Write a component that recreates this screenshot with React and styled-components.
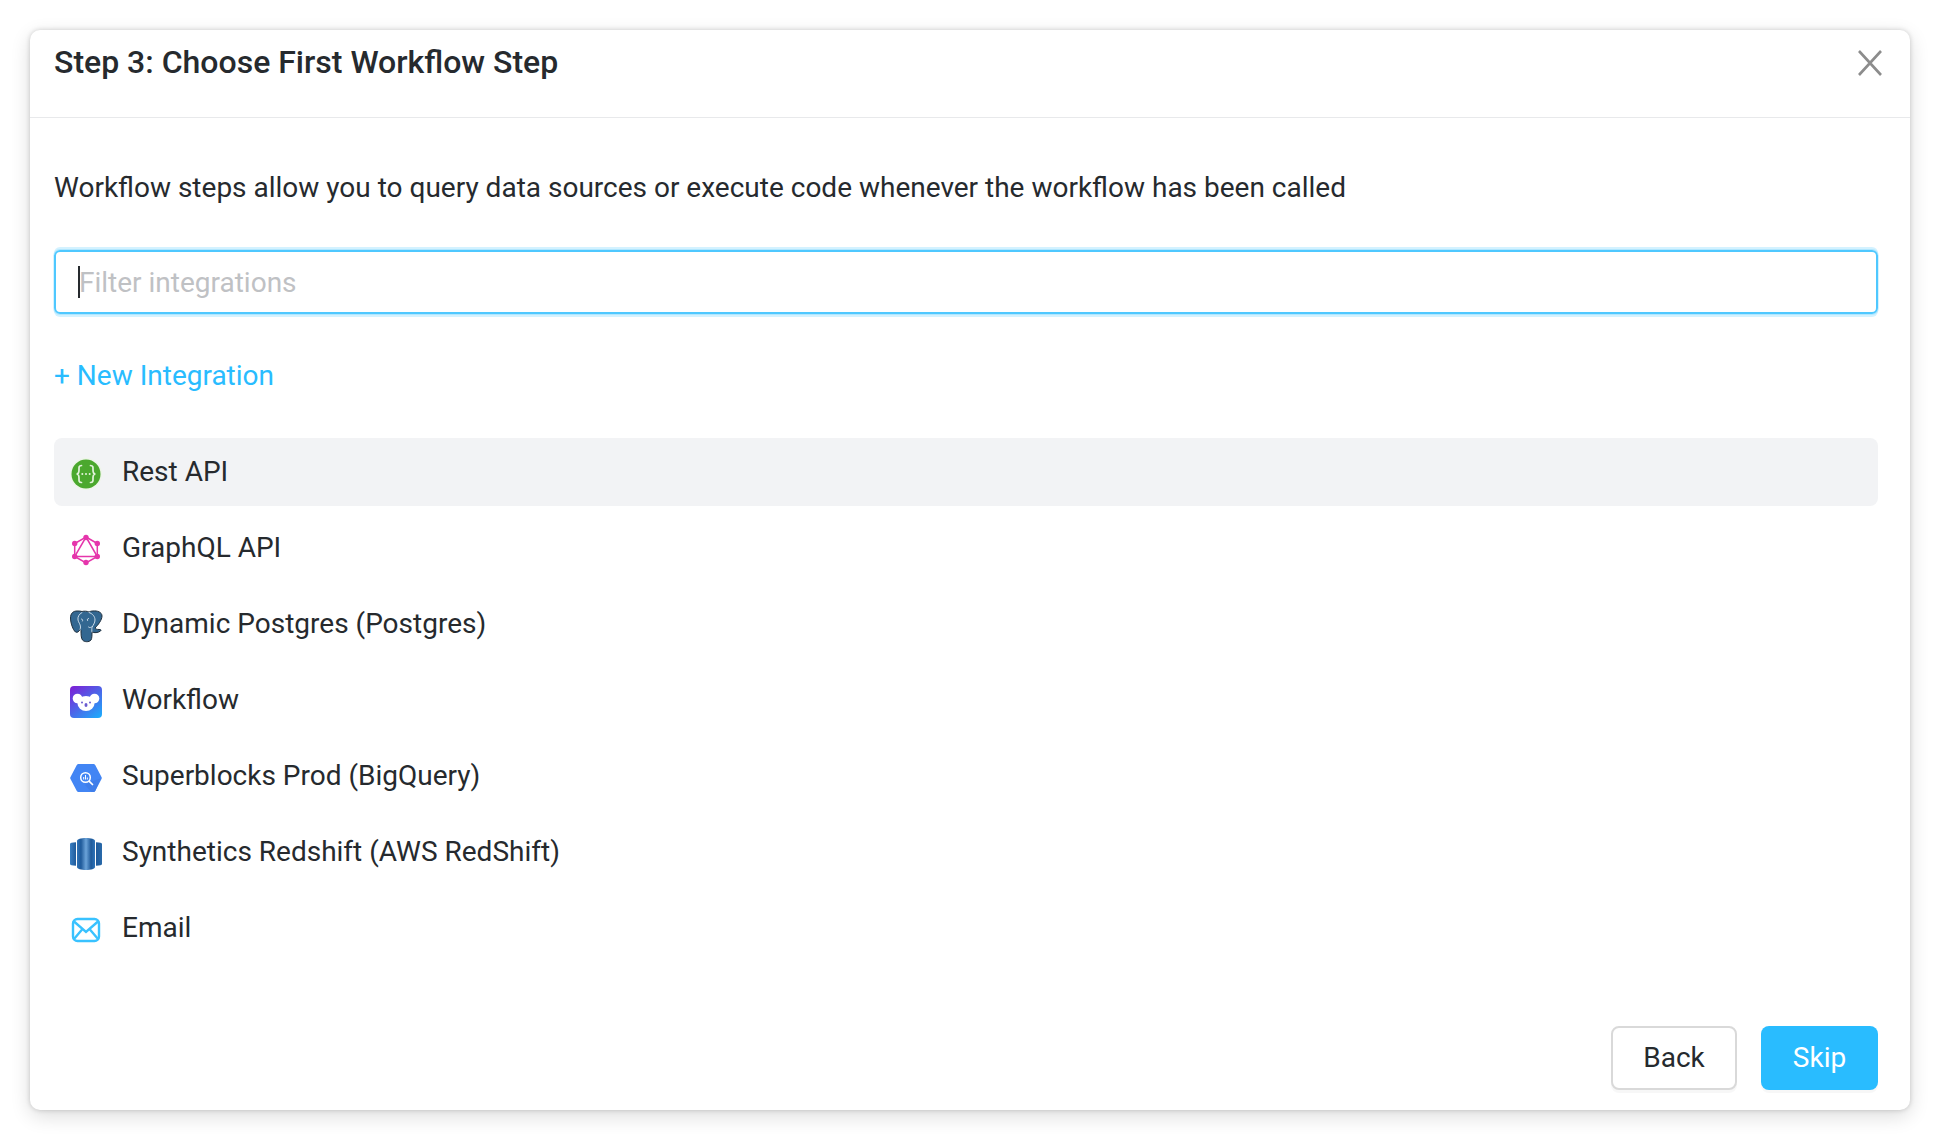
import React from 'react';
import styled, { createGlobalStyle } from 'styled-components';

const GlobalStyle = createGlobalStyle`
	html, body {
		margin: 0;
		background: #ffffff;
	}
	body {
		font-family: Roboto, "Liberation Sans", sans-serif;
		color: #262a2e;
	}
	* {
		box-sizing: border-box;
	}
`;

const Page = styled.div`
	width: 1940px;
	height: 1140px;
	padding: 30px;
`;
const Modal = styled.div`
	width: 1880px;
	height: 1080px;
	background: #fff;
	border-radius: 10px;
	box-shadow: 0 6px 20px rgba(0, 0, 0, 0.14), 0 0 5px rgba(0, 0, 0, 0.18);
	display: flex;
	flex-direction: column;
`;
const Header = styled.div`
	height: 88px;
	flex: none;
	padding: 0 27px 0 24px;
	border-bottom: 1px solid #e8e9eb;
	display: flex;
	justify-content: space-between;
	align-items: flex-start;
`;
const Title = styled.h2`
	margin: 14px 0 0;
	font-size: 32px;
	line-height: 36px;
	font-weight: 500;
	letter-spacing: 0;
`;
const CloseButton = styled.button`
	border: 0;
	background: none;
	padding: 0;
	margin: 20px 0 0;
	width: 26px;
	height: 26px;
	color: #8c8c8c;
	display: block;
`;
const Body = styled.div`
	flex: 1;
	padding: 52px 32px 20px 24px;
	display: flex;
	flex-direction: column;
`;
const Description = styled.p`
	margin: 0;
	font-size: 28px;
	line-height: 36px;
`;
const FilterBox = styled.div`
	position: relative;
	margin-top: 44px;
	height: 64px;
	border: 2px solid #4fc8ff;
	border-radius: 6px;
	box-shadow: 0 -3px 0 0 rgba(41, 188, 255, 0.2), 0 3px 0 0 rgba(41, 188, 255, 0.2), 0 0 0 1px rgba(41, 188, 255, 0.2);
	display: flex;
	align-items: center;
	padding-left: 23px;
`;
const Caret = styled.span`
	position: absolute;
	left: 22px;
	top: 14px;
	width: 2px;
	height: 32px;
	background: #262a2e;
`;
const FilterInput = styled.input`
	border: 0;
	outline: 0;
	width: 100%;
	padding: 0;
	font: 400 28px Roboto, sans-serif;
	color: #262a2e;
	background: transparent;
	&::placeholder {
		color: #bfc1c4;
		opacity: 1;
	}
`;
const NewLink = styled.a`
	margin-top: 44px;
	font-size: 28px;
	line-height: 36px;
	color: #29bcff;
`;
const List = styled.div`
	margin-top: 44px;
	display: flex;
	flex-direction: column;
	gap: 8px;
`;
const Row = styled.div`
	height: 68px;
	border-radius: 8px;
	padding-left: 16px;
	padding-bottom: 1px;
	display: flex;
	align-items: center;
	gap: 20px;
	font-size: 28px;
	background: ${props => (props.$active ? '#f2f3f5' : 'transparent')};
`;
const IconBox = styled.span`
	width: 32px;
	height: 32px;
	flex: none;
	margin-top: 5px;
	display: block;
	svg {
		display: block;
	}
`;
const Footer = styled.div`
	margin-top: auto;
	display: flex;
	justify-content: flex-end;
	gap: 24px;
`;
const Button = styled.button`
	height: 64px;
	width: ${props => props.$width}px;
	border-radius: 8px;
	border: ${props => (props.$primary ? '0' : '2px solid #d9d9d9')};
	background: ${props => (props.$primary ? '#29bcff' : '#fff')};
	color: ${props => (props.$primary ? '#fff' : '#262a2e')};
	box-shadow: 0 3px 0 rgba(0, 0, 0, 0.03);
	font: 400 28px Roboto, sans-serif;
	padding: 0 0 2px;
`;

const RestIcon = () => (
	<svg width="32" height="32" viewBox="0 0 32 32">
		<circle cx="16" cy="16" r="16" fill="#eef5e9" />
		<circle cx="16" cy="16" r="14.500" fill="#4ba82e" />
		<g fill="none" stroke="#e4f3dc" strokeWidth="1.700" strokeLinecap="round">
			<path d="M11.500 7.500c-3 0-2.500 2.500-2.500 4.500 0 2-.5 4-2.500 4 2 0 2.500 2 2.500 4 0 2-.5 4.500 2.500 4.500" />
			<path d="M20.500 7.500c3 0 2.500 2.500 2.500 4.500 0 2 .5 4 2.500 4-2 0-2.500 2-2.500 4 0 2 .5 4.500-2.500 4.500" />
		</g>
		<g fill="#e4f3dc">
			<circle cx="12.300" cy="16" r="1" />
			<circle cx="16" cy="16" r="1" />
			<circle cx="19.700" cy="16" r="1" />
		</g>
	</svg>
);

const GraphqlIcon = () => (
	<svg width="32" height="32" viewBox="0 0 32 32">
		<g fill="none" stroke="#e535ab" strokeWidth="1.500">
			<path d="M16 3 27.300 9.500V22.500L16 29 4.700 22.500V9.500Z" />
			<path d="M16 3 27.300 22.500H4.700Z" />
		</g>
		<g fill="#e535ab">
			<circle cx="16" cy="3.500" r="2.700" />
			<circle cx="27.300" cy="9.500" r="2.700" />
			<circle cx="27.300" cy="22.500" r="2.700" />
			<circle cx="16" cy="28.500" r="2.700" />
			<circle cx="4.700" cy="22.500" r="2.700" />
			<circle cx="4.700" cy="9.500" r="2.700" />
		</g>
	</svg>
);

const PostgresIcon = () => (
	<svg width="33" height="33" viewBox="0 0 33 33">
		<path
			d="M7 1C3 1 .5 3.500 .5 8c0 5 2.500 12 5 14 2 1 3.500-.5 4.500-2.500l1 1c0 3.500 0 7.500 1.500 9.500 1.500 2 6.500 2.500 8.500 0 1-1.500 1-5 1-8 2 1 6 1 8.500-1 1-1 .5-1.500-1.500-1.500-2 0-3.500-.5-4-1.500 3-3 7-8 7-12 0-4-5-5.500-9-5-2 0-3 .5-4 1-2-1-5-1-7-.5C10.500 1 9 1 7 1Z"
			fill="#336791"
			stroke="#1f2f3d"
			strokeWidth="1"
		/>
		<g fill="none" stroke="#dbe7f1" strokeWidth="0.900" strokeLinecap="round">
			<path d="M12 2.500C9 4 7.500 7 8 10c.4 2.500 2.500 4 2.500 7 0 1.500-.5 2.500-.5 2.500" />
			<path d="M19 2.500c3.500 1 6 4 6 7.500 0 3-2 5-3 7.500-.3 1-.1 3.500-.1 4.500" />
			<path d="M11.500 9c1 0 1.500 1 1 2M18.500 8.500c-1 0-1.500 1-1 2" />
			<path d="M21.500 17c-1.500 1-2.500.5-3 0" />
		</g>
	</svg>
);

const WorkflowIcon = () => (
	<svg width="32" height="32" viewBox="0 0 32 32">
		<defs>
			<linearGradient id="koala" x1="0.100" y1="0" x2="0.900" y2="1">
				<stop offset="0" stopColor="#7b22d6" />
				<stop offset="1" stopColor="#1ea9fb" />
			</linearGradient>
		</defs>
		<rect width="32" height="32" rx="4" fill="url(#koala)" />
		<g fill="#fff">
			<circle cx="7.500" cy="12.500" r="4.800" />
			<circle cx="24.500" cy="12.500" r="4.800" />
			<ellipse cx="16" cy="17.500" rx="8.500" ry="7.500" />
		</g>
		<g fill="#6a5bd0">
			<circle cx="12" cy="16.500" r="1" />
			<circle cx="20" cy="16.500" r="1" />
			<ellipse cx="16" cy="19" rx="1.500" ry="2" />
		</g>
	</svg>
);

const BigQueryIcon = () => (
	<svg width="32" height="32" viewBox="0 0 32 32">
		<path d="M8.500 2h15c.7 0 1.300.4 1.700 1L31.500 15a2 2 0 0 1 0 2L25.200 29c-.4.600-1 1-1.700 1h-15c-.7 0-1.300-.4-1.700-1L.5 17a2 2 0 0 1 0-2L6.800 3c.4-.6 1-1 1.700-1Z" fill="#4285f4" />
		<path d="M20 20l10.600-3.400L25.200 29c-.4.600-1 1-1.700 1h-2L15 23Z" fill="#3f7eea" />
		<circle cx="15.500" cy="15.500" r="4.800" fill="none" stroke="#fff" strokeWidth="1.500" />
		<path d="M19.300 19.300 22.500 22.500" stroke="#fff" strokeWidth="1.700" strokeLinecap="round" />
		<path d="M13.700 15v2.500M15.500 13v4.500M17.300 15.500v2" stroke="#fff" strokeWidth="1" />
	</svg>
);

const RedshiftIcon = () => (
	<svg width="32" height="32" viewBox="0 0 32 32">
		<defs>
			<linearGradient id="rsMid" x1="0" y1="0" x2="1" y2="0">
				<stop offset="0" stopColor="#2e73b8" />
				<stop offset="0.220" stopColor="#1f5a9a" />
				<stop offset="0.500" stopColor="#6ba3d9" />
				<stop offset="0.780" stopColor="#1f5a9a" />
				<stop offset="1" stopColor="#2e73b8" />
			</linearGradient>
			<linearGradient id="rsLeft" x1="0" y1="0" x2="1" y2="0">
				<stop offset="0" stopColor="#3a80c4" />
				<stop offset="1" stopColor="#1f5a9a" />
			</linearGradient>
			<linearGradient id="rsRight" x1="0" y1="0" x2="1" y2="0">
				<stop offset="0" stopColor="#1f5a9a" />
				<stop offset="1" stopColor="#2a6aaa" />
			</linearGradient>
		</defs>
		<path d="M0 6c0-1 2-1.500 6-1.700v23.400C2 27.500 0 27 0 26Z" fill="url(#rsLeft)" />
		<path d="M32 6c0-1-2-1.500-6-1.700v23.400c4-.2 6-.7 6-1.700Z" fill="url(#rsRight)" />
		<path d="M7 3c0-1.800 4-3 9-3s9 1.200 9 3v26c0 1.800-4 3-9 3s-9-1.200-9-3Z" fill="url(#rsMid)" />
	</svg>
);

const EmailIcon = () => (
	<svg width="32" height="32" viewBox="0 0 32 32">
		<rect x="3" y="5" width="26" height="22" rx="4.500" fill="none" stroke="#39c2ff" strokeWidth="2.400" />
		<path d="M4 7.500 16 18 28 7.500M4 25l8.500-10M28 25l-8.500-10" fill="none" stroke="#39c2ff" strokeWidth="2.400" />
	</svg>
);

const integrations = [
	{ name: 'Rest API', Icon: RestIcon },
	{ name: 'GraphQL API', Icon: GraphqlIcon },
	{ name: 'Dynamic Postgres (Postgres)', Icon: PostgresIcon },
	{ name: 'Workflow', Icon: WorkflowIcon },
	{ name: 'Superblocks Prod (BigQuery)', Icon: BigQueryIcon },
	{ name: 'Synthetics Redshift (AWS RedShift)', Icon: RedshiftIcon },
	{ name: 'Email', Icon: EmailIcon },
];

const App = () => {
	return (
		<Page>
			<GlobalStyle />
			<Modal>
				<Header>
					<Title>Step 3: Choose First Workflow Step</Title>
					<CloseButton aria-label="Close">
						<svg width="26" height="26" viewBox="0 0 26 26">
							<path d="M2 1 24 25M24 1 2 25" stroke="currentColor" strokeWidth="2.600" fill="none" />
						</svg>
					</CloseButton>
				</Header>
				<Body>
					<Description>
						Workflow steps allow you to query data sources or execute code whenever the workflow has been called
					</Description>
					<FilterBox>
						<Caret />
						<FilterInput placeholder="Filter integrations" />
					</FilterBox>
					<NewLink>+ New Integration</NewLink>
					<List>
						{integrations.map(({ name, Icon }, i) => (
							<Row key={name} $active={i === 0}>
								<IconBox><Icon /></IconBox>
								{name}
							</Row>
						))}
					</List>
					<Footer>
						<Button $width={126}>Back</Button>
						<Button $width={117} $primary>Skip</Button>
					</Footer>
				</Body>
			</Modal>
		</Page>
	);
};

export default App;
